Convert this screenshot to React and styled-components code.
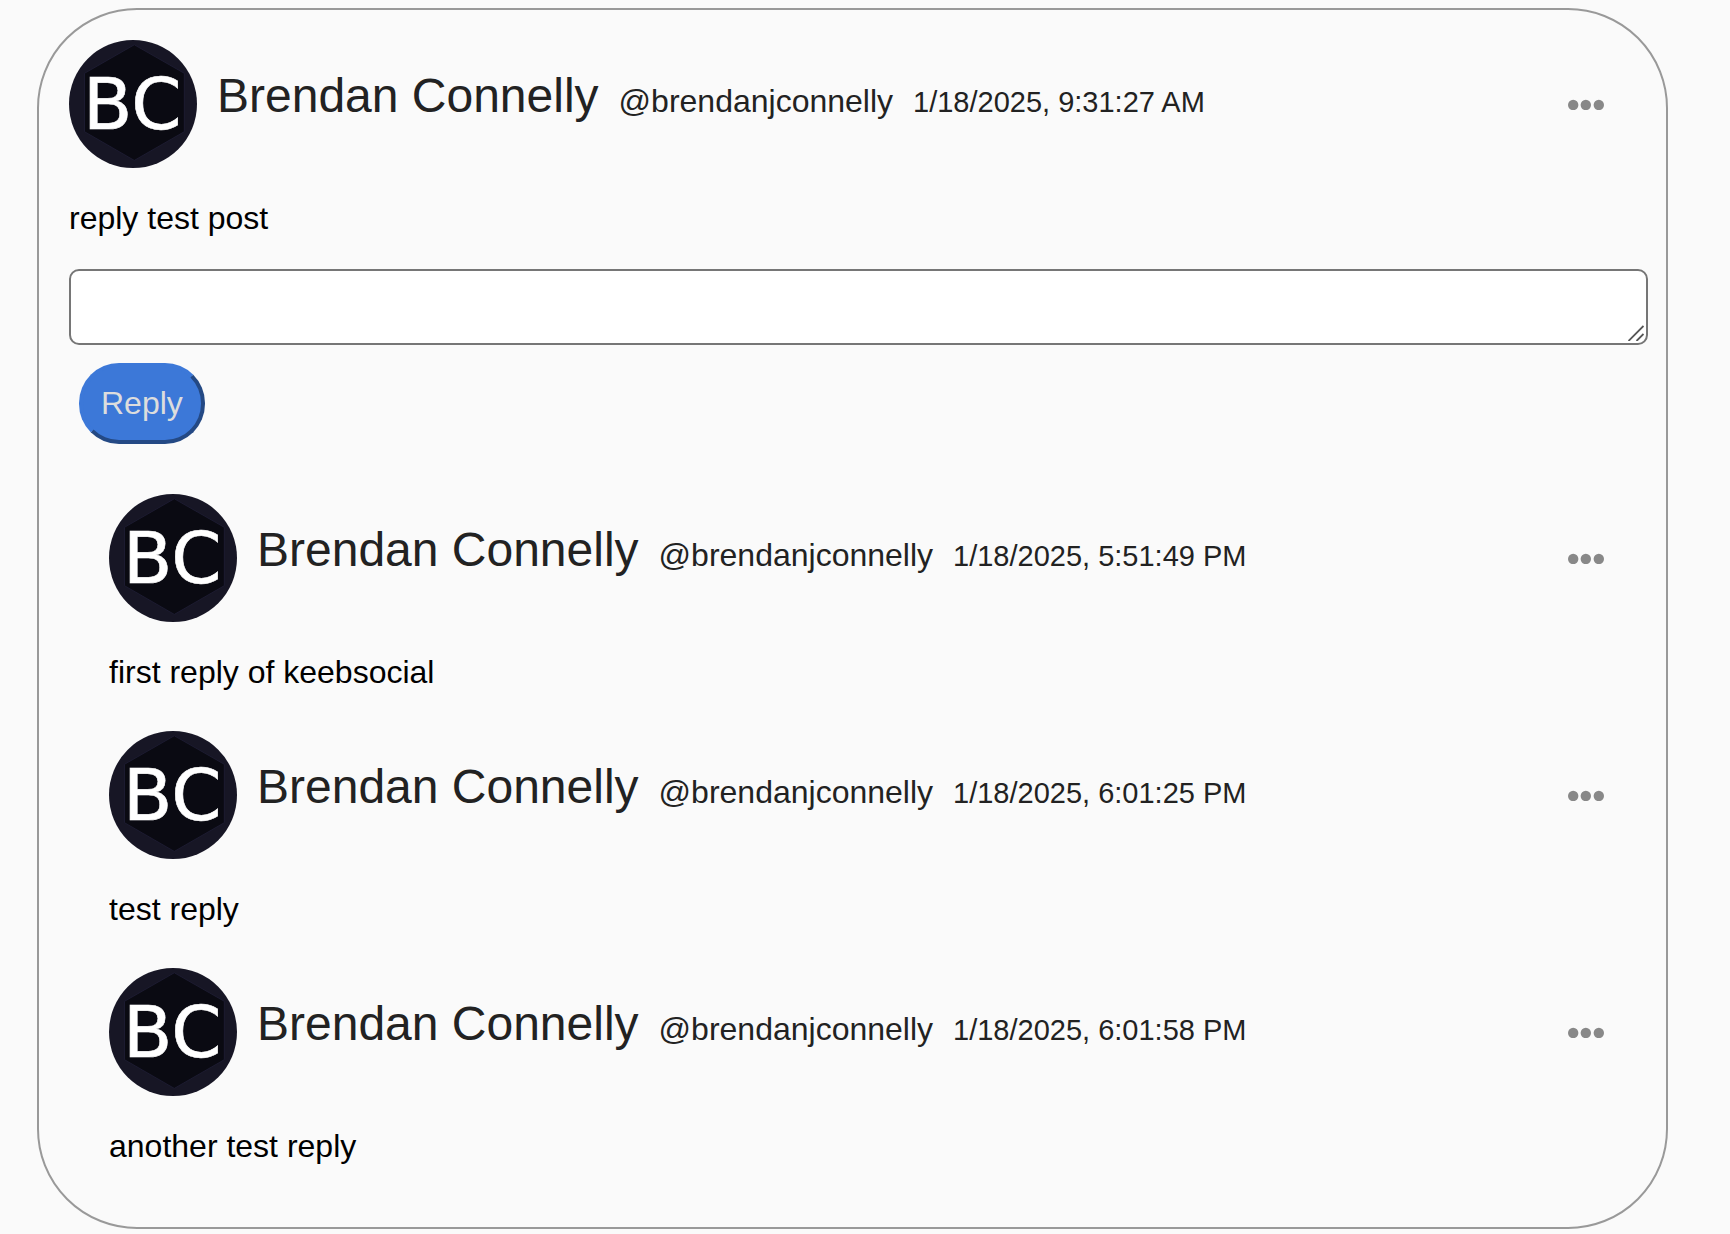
import React from 'react'
import styled, { createGlobalStyle } from 'styled-components'

const replies = [
    { id: 1, date: '1/18/2025, 5:51:49 PM', body: 'first reply of keebsocial' },
    { id: 2, date: '1/18/2025, 6:01:25 PM', body: 'test reply' },
    { id: 3, date: '1/18/2025, 6:01:58 PM', body: 'another test reply' },
]

function Avatar() {
    return (
        <AvatarImg viewBox="0 0 128 128" role="img" aria-label="Brendan Connelly">
            <circle cx="64" cy="64" r="64" fill="#171625" />
            <path d="M65.3 4.8 115.3 33.3V91.7L65.3 120.4 15.5 91.7V33.3Z" fill="#0a0a12" stroke="#201e36" strokeWidth="0.8" />
            <AvatarText x="14" y="89.2">BC</AvatarText>
        </AvatarImg>
    )
}

function Post(props) {
    return (
        <article>
            <Header>
                <Avatar />
                <Author>
                    <Name>{props.name}</Name>
                    <Handle>@{props.handle}</Handle>
                    <PostDate>{props.date}</PostDate>
                </Author>
                <MenuButton type="button" aria-label="Post options">
                    <svg width="36" height="12" viewBox="0 0 36 12" fill="#888">
                        <circle cx="5.2" cy="7" r="5.2" />
                        <circle cx="17.8" cy="7" r="5.2" />
                        <circle cx="30.8" cy="7" r="5.2" />
                    </svg>
                </MenuButton>
            </Header>
            <Body>{props.body}</Body>
        </article>
    )
}

function ReplyForm() {
    return (
        <form onSubmit={e => e.preventDefault()}>
            <Field>
                <ReplyBox aria-label="Write a reply" />
                <Grip viewBox="0 0 16 16">
                    <path d="M0.5 16 15.5 1M8.5 16 15.5 9" stroke="#555" strokeWidth="1.8" />
                </Grip>
            </Field>
            <ReplyButton type="submit">Reply</ReplyButton>
        </form>
    )
}

function App() {
    return (
        <Page>
            <GlobalStyle />
            <Card>
                <Post name="Brendan Connelly" handle="brendanjconnelly" date="1/18/2025, 9:31:27 AM" body="reply test post" />
                <ReplyForm />
                <Replies>
                    {replies.map(reply => (
                        <Post key={reply.id} name="Brendan Connelly" handle="brendanjconnelly" date={reply.date} body={reply.body} />
                    ))}
                </Replies>
            </Card>
        </Page>
    )
}

export default App

const GlobalStyle = createGlobalStyle`
    *{
        box-sizing: border-box;
    }
    body{
        margin: 0;
        background-color: #fafafa;
        color: #000;
        font-family: "Liberation Sans", Arial, sans-serif;
        font-size: 32px;
        line-height: 37px;
    }
`

const Page = styled.main`
    padding: 8px 62px 5px 37px;
`

const Card = styled.section`
    border: 2px solid #999;
    border-radius: 100px;
    padding: 30px;
`

const Header = styled.header`
    display: flex;
    align-items: center;
    gap: 20px;
    padding-right: 32px;
`

const AvatarImg = styled.svg`
    width: 128px;
    height: 128px;
    flex-shrink: 0;
`

const AvatarText = styled.text`
    font-family: "DejaVu Sans", sans-serif;
    font-size: 72px;
    fill: white;
    stroke: white;
    stroke-width: 0.6px;
`

const Author = styled.div`
    display: flex;
    flex: 1;
    align-items: baseline;
    gap: 20px;
    padding-bottom: 18px;
    color: #222;
`

const Name = styled.span`
    font-size: 48px;
    line-height: 55px;
`

const Handle = styled.span``

const PostDate = styled.time`
    font-size: 29px;
`

const MenuButton = styled.button`
    display: flex;
    padding: 0;
    border: none;
    background: none;
    cursor: pointer;
`

const Body = styled.p`
    margin: 32px 0;
`

const Field = styled.div`
    position: relative;
    margin: 0 -12px 18px 0;
`

const ReplyBox = styled.textarea`
    display: block;
    width: 100%;
    height: 76px;
    padding: 4px;
    border: 2px solid #767676;
    border-radius: 10px;
    background-color: white;
    font: inherit;
    resize: none;
`

// sits over the corner of the text box
const Grip = styled.svg`
    position: absolute;
    right: 4px;
    bottom: 4px;
    width: 16px;
    height: 16px;
    pointer-events: none;
`

const ReplyButton = styled.button`
    display: block;
    margin-left: 10px;
    padding: 18px;
    border: 4px outset #3c78d8;
    border-radius: 40px;
    background-color: #3c78d8;
    color: #ddd;
    font: inherit;
    cursor: pointer;
`

const Replies = styled.div`
    display: flex;
    flex-direction: column;
    gap: 8px;
    margin-top: 50px;
    padding-left: 40px;
`
